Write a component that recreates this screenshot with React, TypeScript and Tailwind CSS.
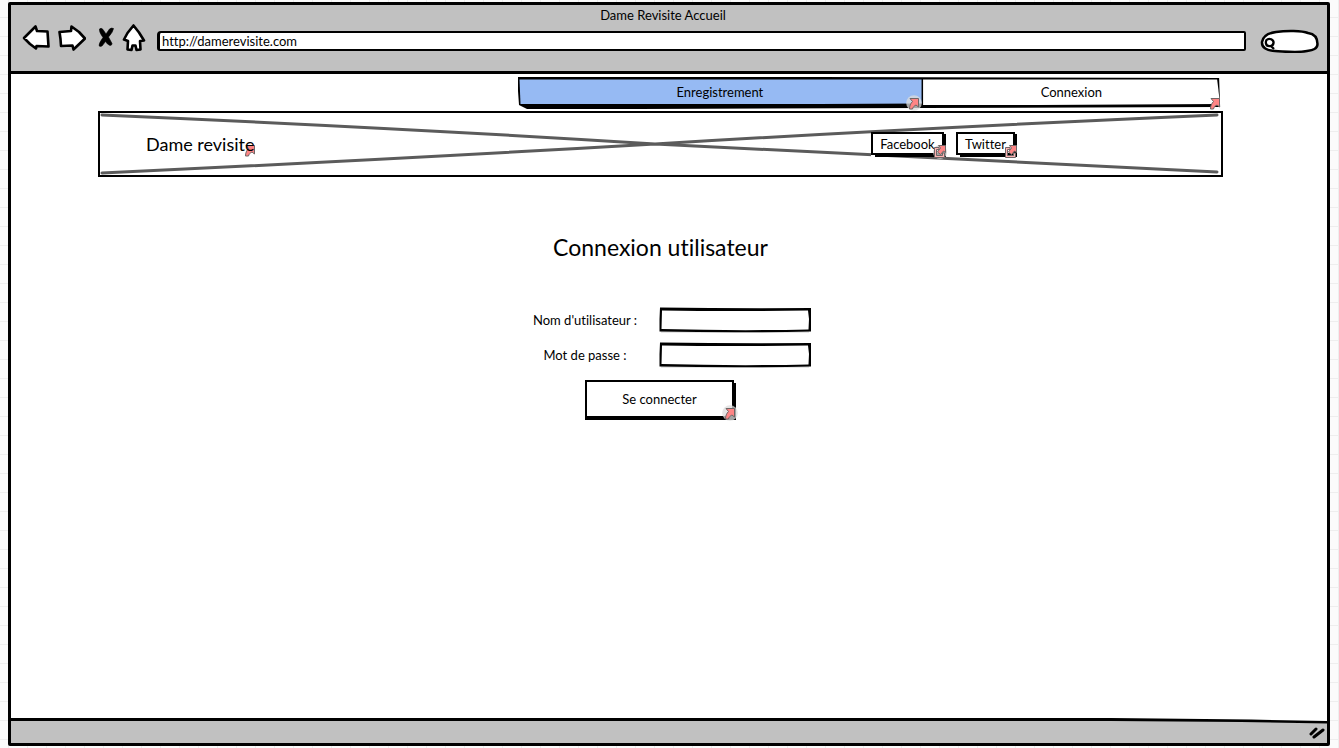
import React from 'react';

function LinkBadge({ className = '', halo = true }: { className?: string; halo?: boolean }) {
  return (
    <svg aria-hidden="true" viewBox="0 0 16 16" className={`pointer-events-none absolute size-4 ${className}`}>
      {halo && <circle cx="8" cy="8" r="7.8" fill="#dcdcdc" fillOpacity="0.75" />}
      <path
        d="M4 3.500H12.500V12L10 10C8 11 7 12 6.500 14H3.500C3.500 11 4.500 8.500 6.500 6.500Z"
        fill="#ff8585"
        stroke="#6f6666"
        strokeWidth="1"
      />
    </svg>
  );
}

function ExternalBadge({ className = '', halo = false }: { className?: string; halo?: boolean }) {
  return (
    <svg aria-hidden="true" viewBox="0 0 16 16" className={`pointer-events-none absolute size-4 ${className}`}>
      {halo && <circle cx="8" cy="9" r="7" fill="#d0d0d0" fillOpacity="0.8" />}
      <path d="M2.500 4.500H7V6.500H4.500V12.500H10.500V10H12.500V14.500H2.500Z" fill="#ffb3b3" stroke="#6f6666" strokeWidth="1" />
      <path d="M6.500 2.500H13.500V9.500L11.500 8L8.500 11.500L5.500 9L8.500 5Z" fill="#ff8585" stroke="#6f6666" strokeWidth="1" />
    </svg>
  );
}

function Field({ id, label, type }: { id: string; label: string; type: string }) {
  return (
    <>
      <label htmlFor={id} className="text-center whitespace-nowrap">
        {label}
      </label>
      <div className="relative h-[26px]">
        <svg
          aria-hidden="true"
          viewBox="0 0 153 26"
          preserveAspectRatio="none"
          className="absolute inset-0 size-full"
        >
          <path d="M2 25H150" fill="none" stroke="#ccc" strokeWidth="1" />
          <path
            d="M1 0.500Q76 1.500 152 1V24.500Q76 26 0.500 24.500L0.500 12ZM3 3.500L2.500 22Q76 24 149.500 22.500L150 12L149 3.500Q76 4.500 3 3.500Z"
            fill="#000"
            fillRule="evenodd"
          />
        </svg>
        <input id={id} name={id} type={type} className="relative block size-full bg-transparent px-2 outline-none" />
      </div>
    </>
  );
}

function SocialLink({ label, href, className, halo }: { label: string; href: string; className: string; halo?: boolean }) {
  return (
    <a
      href={href}
      className={`relative block h-[25px] border-2 border-r-4 border-b-4 border-black bg-white text-center leading-5 ${className}`}
    >
      {label}
      <span aria-hidden="true" className="absolute -bottom-[4px] -left-[2px] h-[2px] w-1 bg-white" />
      <span aria-hidden="true" className="absolute -top-[2px] -right-[4px] h-[2px] w-[2px] bg-white" />
      <ExternalBadge halo={halo} className="-right-[6px] -bottom-[6px]" />
    </a>
  );
}

export default function App() {
  return (
    <div className="min-h-screen bg-[#fbfbfb] bg-[linear-gradient(#eeeeee_1px,transparent_1px),linear-gradient(90deg,#eeeeee_1px,transparent_1px)] bg-[size:19px_19px] bg-[position:8px_17px] pt-[2px] pr-[9px] pb-[2px] pl-[8px] font-['Lato','Liberation_Sans',sans-serif] text-[13px] leading-[18px] text-black [font-variant-ligatures:none]">
      <div className="flex min-h-[calc(100vh-4px)] flex-col rounded-[2px] border-[3px] border-black bg-white">
        <header className="border-b-[3px] border-black bg-[#c1c1c1] pb-[18px]">
          <h1 className="pt-[2px] pr-[12px] text-center leading-4">Dame Revisite Accueil</h1>
          <div className="flex h-[30px] items-center pr-[8px] pl-[11px]">
            <button type="button" aria-label="Page précédente" className="w-7">
              <svg viewBox="0 0 28 28" className="block size-7">
                <path
                  d="M2 14L13.500 2.500L15 7L25.500 7.500L26 15L26.500 22.500L14.500 22L14 24.500L8 20Z"
                  fill="#fff"
                  stroke="#000"
                  strokeWidth="2.600"
                  strokeLinejoin="round"
                />
              </svg>
            </button>
            <button type="button" aria-label="Page suivante" className="ml-2 w-7">
              <svg viewBox="0 0 28 28" className="block size-7">
                <path
                  d="M1.500 8L13 7L13.500 2.500L21 8L27 14.500L15.500 25.500L14.500 21.500L3 22L2.500 15Z"
                  fill="#fff"
                  stroke="#000"
                  strokeWidth="2.600"
                  strokeLinejoin="round"
                />
              </svg>
            </button>
            <button type="button" aria-label="Arrêter" className="ml-3 w-4">
              <svg viewBox="0 0 16 28" className="block h-7 w-4">
                <path
                  d="M1.500 5Q3 3.500 5 5.500L8 10L11.500 5Q13.500 3.500 15.500 4.500Q15 8 10.500 13L14 19.500Q14 21.500 12 21.500L9.500 20L7.500 17.500L4 22Q1.500 23 1 21.500Q1 19 5 13.500Q1 8 1.500 5Z"
                  fill="#000"
                  stroke="#000"
                  strokeWidth="0.600"
                />
              </svg>
            </button>
            <button type="button" aria-label="Accueil" className="ml-2 w-6">
              <svg viewBox="0 0 24 28" className="block h-7 w-6">
                <path
                  d="M2 15.500L5.500 9L11.500 1.500L17 8.500L22 16.500L18 17L18.500 25.500L14.500 26L13.500 21.500L10.500 21.500L9.500 26L5.500 25.500L6 17Z"
                  fill="#fff"
                  stroke="#000"
                  strokeWidth="2.600"
                  strokeLinejoin="round"
                />
              </svg>
            </button>
            <div className="mt-[6px] ml-[11px] flex h-5 flex-1">
              <input
                aria-label="Adresse"
                defaultValue="http://damerevisite.com"
                className="h-5 w-full rounded-tl-[4px] rounded-r-[2px] rounded-bl-[3px] border-2 border-l-[3px] border-black bg-white px-[2px] leading-4 outline-none"
              />
            </div>
            <div className="relative mt-[6px] ml-[14px] h-6 w-[59px]">
              <svg aria-hidden="true" viewBox="0 -1 59 24" className="absolute inset-0 size-full">
                <path
                  d="M2 12C3 5 9 3 16 2C26 0.500 42 0.500 48 3C55 4 57.500 9 57.500 14C57.500 19 53 20 47 21C37 23 26 21.500 15 21C7 20.500 1.500 18 2 12Z"
                  fill="#fff"
                  stroke="#000"
                  strokeWidth="2.500"
                />
                <path d="M6.500 10C9 7.500 14 9.500 13.500 13C13 17 6.500 17 6 13.500C5.500 12 6 11 6.500 10ZM11 16L14 19" fill="none" stroke="#000" strokeWidth="2.300" />
              </svg>
              <input aria-label="Rechercher" className="relative block size-full bg-transparent pr-3 pl-5 outline-none" />
            </div>
          </div>
        </header>

        <main className="flex-1 pt-[3px] pr-[104px] pl-[87px]">
          <nav className="relative mr-[2px] ml-auto flex h-8 w-5/8">
            <svg
              aria-hidden="true"
              viewBox="0 0 703 32"
              preserveAspectRatio="none"
              className="absolute inset-0 size-full"
            >
              <path d="M0 0H300L701 1L702 30L404 31L120 32L9 32L1 28L0 14Z" fill="#000" />
              <path d="M405 2.500H699L702 27L520 28L405 28Z" fill="#fff" />
              <path d="M1.500 2.500H403.500V26.500L300 27H2.500Z" fill="#96baf3" />
            </svg>
            <a href="#enregistrement" className="relative block w-[404px] shrink text-center leading-[30px]">
              Enregistrement
              <LinkBadge className="right-0 -bottom-[2px]" />
            </a>
            <a href="#connexion" className="relative block w-[299px] shrink text-center leading-[30px]">
              Connexion
              <LinkBadge className="-right-[2px] -bottom-[2px]" halo={false} />
            </a>
          </nav>

          <section className="relative mt-[2px] flex h-[66px] items-center border-2 border-black">
            <svg
              aria-hidden="true"
              viewBox="0 0 1121 62"
              preserveAspectRatio="none"
              className="absolute inset-0 size-full"
            >
              <path
                d="M2 2Q300 15 555 31Q800 43 1117 59M2 60Q300 46 555 31Q800 16 1117 2"
                fill="none"
                stroke="#5b5b5b"
                strokeWidth="3"
                strokeLinecap="round"
              />
            </svg>
            <a href="#accueil" className="relative ml-[46px] text-[18px] leading-6">
              <LinkBadge className="-right-[4px] -bottom-[2px]" halo={false} />
              <span className="relative">Dame revisite</span>
            </a>
            <div className="relative mr-[204px] ml-auto flex gap-[10px]">
              <SocialLink label="Facebook" href="#facebook" className="w-[75px]" halo />
              <SocialLink label="Twitter" href="#twitter" className="w-[61px]" />
            </div>
          </section>

          <h2 className="mt-[55px] text-center text-[23px] leading-[30px]">Connexion utilisateur</h2>
          <form className="mt-[45px] flex flex-col items-center" onSubmit={(e) => e.preventDefault()}>
            <div className="grid grid-cols-[104px_153px] items-center gap-x-[22px] gap-y-[9px] pl-6">
              <Field id="utilisateur" label="Nom d'utilisateur :" type="text" />
              <Field id="passe" label="Mot de passe :" type="password" />
            </div>
            <button
              type="submit"
              className="relative mt-3 h-10 w-[151px] border-2 border-r-4 border-b-4 border-black bg-white"
            >
              Se connecter
              <LinkBadge className="-right-[6px] -bottom-[5px]" />
              <span aria-hidden="true" className="absolute -top-[2px] -right-[4px] h-[3px] w-[2px] bg-white" />
            </button>
          </form>
        </main>

        <footer className="relative h-[25px] bg-[#c1c1c1]">
          <svg
            aria-hidden="true"
            viewBox="0 0 1316 8"
            preserveAspectRatio="none"
            className="absolute inset-x-0 top-0 h-2 w-full"
          >
            <path d="M0 0H1316V5L1240 3L1180 2H0Z" fill="#fff" />
            <path d="M0 0H1100L1240 1.500L1316 3V5.500L1230 4L1100 3H0Z" fill="#000" />
          </svg>
          <svg aria-hidden="true" viewBox="0 0 16 12" className="absolute right-[2px] bottom-[4px] h-3 w-4">
            <path d="M2 7L7 2M5 10L14 3" fill="none" stroke="#000" strokeWidth="3" strokeLinecap="round" />
          </svg>
        </footer>
      </div>
    </div>
  );
}
